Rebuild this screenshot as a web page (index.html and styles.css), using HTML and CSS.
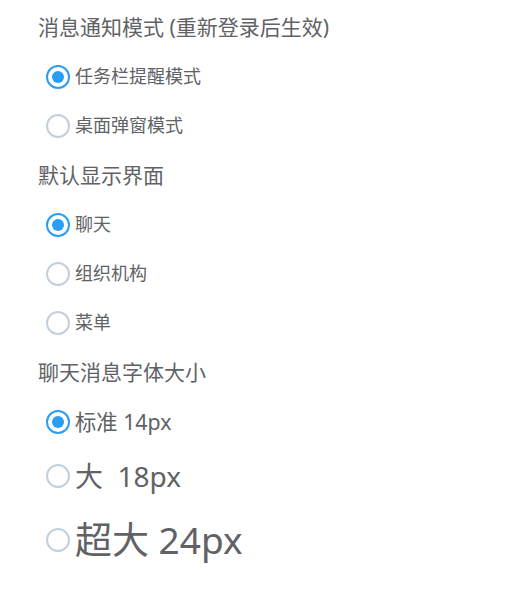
FILE: index.html
```html
<!DOCTYPE html>
<html lang="zh-CN">
<head>
<meta charset="utf-8">
<link rel="stylesheet" href="styles.css">
</head>
<body>
<div class="settings">
  <div class="group-title">消息通知模式 (重新登录后生效)</div>
  <div class="option"><span class="radio checked"></span><span class="label">任务栏提醒模式</span></div>
  <div class="option"><span class="radio"></span><span class="label">桌面弹窗模式</span></div>

  <div class="group-title">默认显示界面</div>
  <div class="option"><span class="radio checked"></span><span class="label">聊天</span></div>
  <div class="option"><span class="radio"></span><span class="label">组织机构</span></div>
  <div class="option"><span class="radio"></span><span class="label">菜单</span></div>

  <div class="group-title">聊天消息字体大小</div>
  <div class="option size-14"><span class="radio checked"></span><span class="label">标准 14px</span></div>
  <div class="option size-18"><span class="radio"></span><span class="label">大&nbsp; 18px</span></div>
  <div class="option size-24"><span class="radio"></span><span class="label">超大 24px</span></div>
</div>
</body>
</html>
```
FILE: styles.css
```css
html, body {
  margin: 0;
  padding: 0;
  background: #ffffff;
}
body {
  font-family: "Noto Sans", "Noto Sans CJK SC", sans-serif;
  color: #606266;
}
.settings {
  display: flex;
  flex-direction: column;
  padding: 2px 0 0 38px;
}
.group-title {
  font-size: 21px;
  line-height: 30px;
  padding: 10px 0;
}
.option {
  display: flex;
  align-items: center;
  gap: 5px;
  padding: 12px 0 12px 8px;
  font-size: 18px;
  line-height: 25px;
}
.option.size-14 {
  font-size: 21.3px;
  line-height: 30px;
  padding-top: 10px;
  padding-bottom: 10px;
}
.option.size-18 {
  font-size: 28px;
  line-height: 38px;
  padding-top: 10px;
  padding-bottom: 10px;
}
.option.size-24 {
  font-size: 37px;
  line-height: 50px;
  padding-top: 10px;
  padding-bottom: 10px;
}
.radio {
  box-sizing: border-box;
  width: 24px;
  height: 24px;
  border-radius: 50%;
  border: 2px solid #c3cfdd;
  background: #fff;
  display: flex;
  align-items: center;
  justify-content: center;
  flex: none;
}
.radio.checked {
  border-color: #2a9df4;
}
.radio.checked::after {
  content: "";
  width: 12px;
  height: 12px;
  border-radius: 50%;
  background: #2a9df4;
}
```
